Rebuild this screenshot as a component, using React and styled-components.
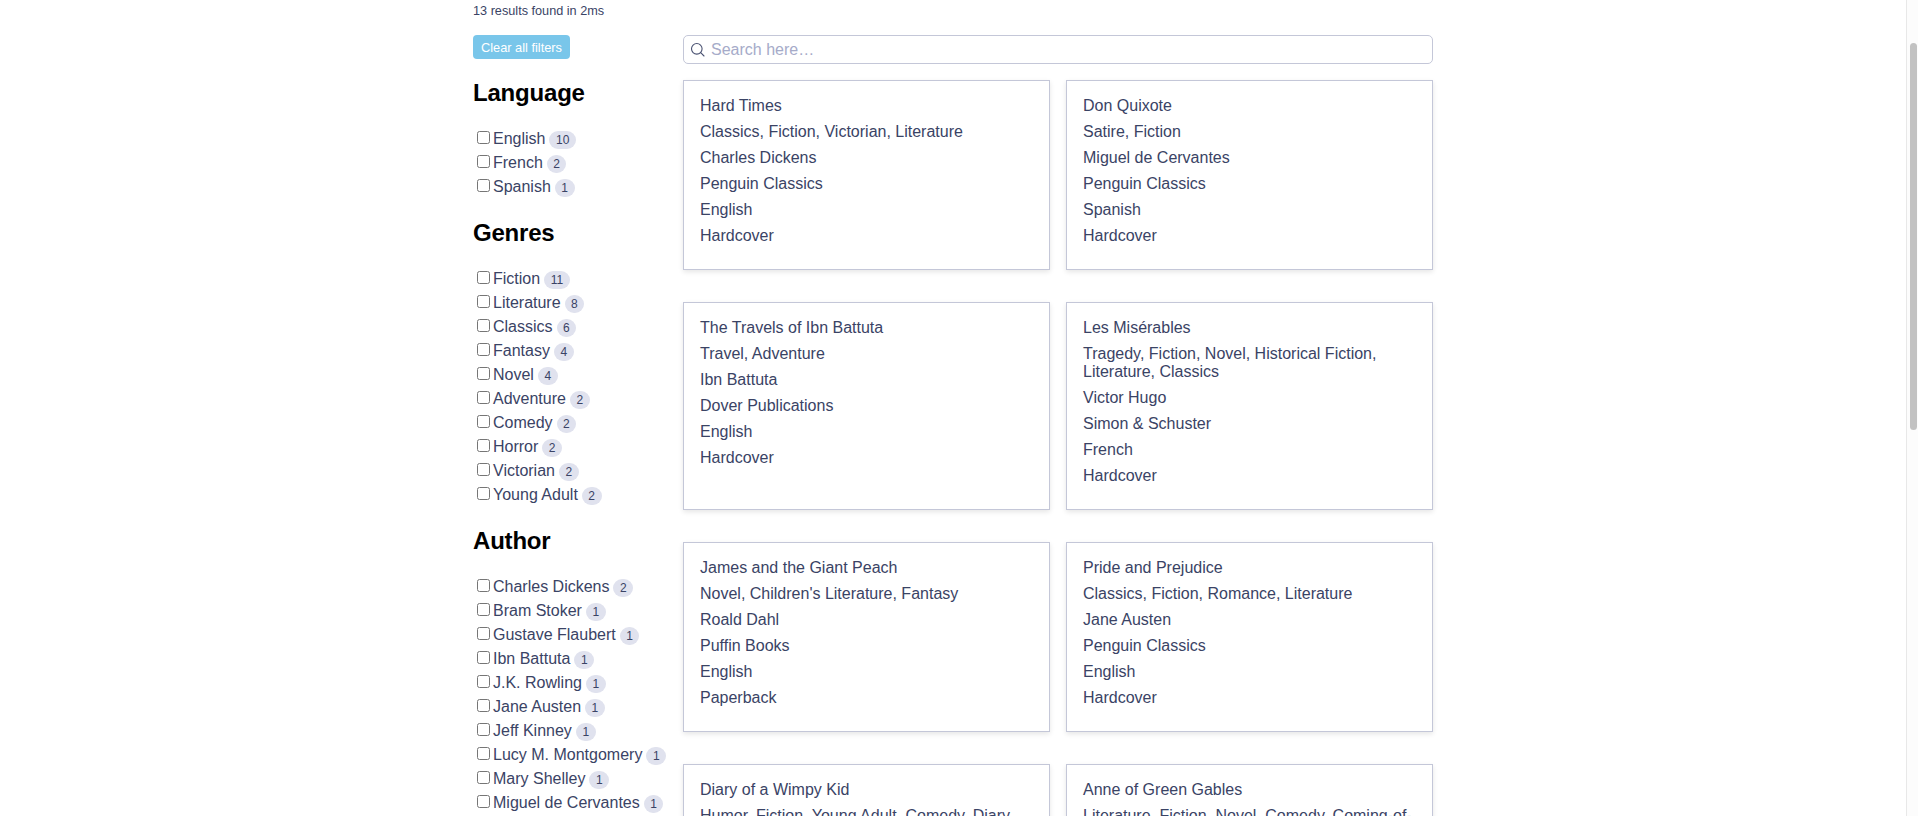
import styled, { createGlobalStyle } from "styled-components";

const GlobalStyle = createGlobalStyle`
  html, body {
    margin: 0;
    height: 100%;
    overflow: hidden;
    background: #fff;
  }
  body {
    font-family: "Liberation Sans", Arial, sans-serif;
    color: #3a4365;
  }
`;

const Screen = styled.div`
  display: flex;
  height: 816px;
  overflow: hidden;
`;

const Page = styled.main`
  flex: 1;
  min-width: 0;
  overflow: hidden;
`;

const Container = styled.div`
  width: 960px;
  margin: 0 auto;
  padding-top: 3px;
`;

const Stats = styled.div`
  font-size: 12.7px;
  line-height: 16px;
  margin-bottom: 16px;
`;

const Columns = styled.div`
  display: grid;
  grid-template-columns: 210px 750px;
`;

const ClearButton = styled.button`
  display: block;
  width: 97px;
  height: 24px;
  padding: 1px 0 0;
  background: #79c6ea;
  color: #fff;
  border: none;
  border-radius: 4px;
  font-family: inherit;
  font-size: 12.8px;
  font-weight: 500;
`;

const Heading = styled.h2`
  font-size: 24px;
  font-weight: 700;
  letter-spacing: -0.2px;
  color: #000;
  margin: 20px 0;
  line-height: 28px;
`;

const FacetList = styled.ul`
  list-style: none;
  margin: 0;
  padding: 0;
`;

const FacetItem = styled.li`
  height: 24px;
  display: flex;
  align-items: center;
  font-size: 16px;
`;

const Check = styled.input`
  margin: 0 3px 3px 4px;
`;

const Count = styled.span`
  margin: 2px 0 0 4px;
  height: 18px;
  line-height: 18px;
  padding: 0 6.5px;
  border-radius: 9px;
  background: #e0e2ee;
  font-size: 12px;
`;

const SearchBox = styled.form`
  display: flex;
  align-items: center;
  box-sizing: border-box;
  height: 29px;
  margin: 0 0 16px;
  padding: 0 6px;
  border: 1px solid #c4c7d8;
  border-radius: 5px;
  background: #fff;
`;

const SearchInput = styled.input`
  flex: 1;
  margin-left: 6px;
  padding: 0;
  border: none;
  outline: none;
  background: transparent;
  font-family: inherit;
  font-size: 16px;
  color: #3a4365;

  &::placeholder {
    color: #a6abc9;
    opacity: 1;
  }
`;

const Results = styled.div`
  display: grid;
  grid-template-columns: 1fr 1fr;
  column-gap: 16px;
  row-gap: 32px;
`;

const Card = styled.article`
  border: 1px solid #c4c7d8;
  padding: 16px;
  background: #fff;
  box-shadow: 0 2px 5px rgba(0, 0, 0, 0.1);
`;

const CardLine = styled.div`
  font-size: 16px;
  line-height: 18px;
  margin-bottom: 8px;
`;

const Track = styled.aside`
  width: 12px;
  flex-shrink: 0;
  box-sizing: border-box;
  padding: 43px 1px 0 3px;
  background: #fcfcfc;
  border-left: 1px solid #e8e8e8;
`;

const Thumb = styled.div`
  height: 387px;
  border-radius: 4px;
  background: #c2c2c2;
`;

const facets = [
  {
    title: "Language",
    items: [
      ["English", 10],
      ["French", 2],
      ["Spanish", 1],
    ],
  },
  {
    title: "Genres",
    items: [
      ["Fiction", 11],
      ["Literature", 8],
      ["Classics", 6],
      ["Fantasy", 4],
      ["Novel", 4],
      ["Adventure", 2],
      ["Comedy", 2],
      ["Horror", 2],
      ["Victorian", 2],
      ["Young Adult", 2],
    ],
  },
  {
    title: "Author",
    items: [
      ["Charles Dickens", 2],
      ["Bram Stoker", 1],
      ["Gustave Flaubert", 1],
      ["Ibn Battuta", 1],
      ["J.K. Rowling", 1],
      ["Jane Austen", 1],
      ["Jeff Kinney", 1],
      ["Lucy M. Montgomery", 1],
      ["Mary Shelley", 1],
      ["Miguel de Cervantes", 1],
    ],
  },
];

const books = [
  ["Hard Times", "Classics, Fiction, Victorian, Literature", "Charles Dickens", "Penguin Classics", "English", "Hardcover"],
  ["Don Quixote", "Satire, Fiction", "Miguel de Cervantes", "Penguin Classics", "Spanish", "Hardcover"],
  ["The Travels of Ibn Battuta", "Travel, Adventure", "Ibn Battuta", "Dover Publications", "English", "Hardcover"],
  ["Les Misérables", "Tragedy, Fiction, Novel, Historical Fiction, Literature, Classics", "Victor Hugo", "Simon & Schuster", "French", "Hardcover"],
  ["James and the Giant Peach", "Novel, Children's Literature, Fantasy", "Roald Dahl", "Puffin Books", "English", "Paperback"],
  ["Pride and Prejudice", "Classics, Fiction, Romance, Literature", "Jane Austen", "Penguin Classics", "English", "Hardcover"],
  ["Diary of a Wimpy Kid", "Humor, Fiction, Young Adult, Comedy, Diary", "Jeff Kinney", "Puffin Books", "English", "Hardcover"],
  ["Anne of Green Gables", "Literature, Fiction, Novel, Comedy, Coming-of-Age", "Lucy M. Montgomery", "Penguin Classics", "English", "Paperback"],
];

function SearchIcon() {
  return (
    <svg width="15" height="15" viewBox="0 0 15 15" fill="none" stroke="#4a5272" strokeWidth="1.1">
      <circle cx="6.8" cy="6.8" r="5.3" />
      <path d="M10.7 10.7L14 14" strokeLinecap="round" />
    </svg>
  );
}

function App() {
  return (
    <Screen>
      <GlobalStyle />
      <Page>
        <Container>
          <Stats>13 results found in 2ms</Stats>
          <Columns>
            <div>
              <ClearButton type="button">Clear all filters</ClearButton>
              {facets.map((facet) => (
                <section key={facet.title}>
                  <Heading>{facet.title}</Heading>
                  <FacetList>
                    {facet.items.map(([name, count]) => (
                      <FacetItem key={name}>
                        <Check type="checkbox" />
                        <span>{name}</span>
                        <Count>{count}</Count>
                      </FacetItem>
                    ))}
                  </FacetList>
                </section>
              ))}
            </div>
            <div>
              <SearchBox>
                <SearchIcon />
                <SearchInput placeholder="Search here…" />
              </SearchBox>
              <Results>
                {books.map((book) => (
                  <Card key={book[0]}>
                    {book.map((line, i) => (
                      <CardLine key={i}>{line}</CardLine>
                    ))}
                  </Card>
                ))}
              </Results>
            </div>
          </Columns>
        </Container>
      </Page>
      <Track>
        <Thumb />
      </Track>
    </Screen>
  );
}

export default App;
